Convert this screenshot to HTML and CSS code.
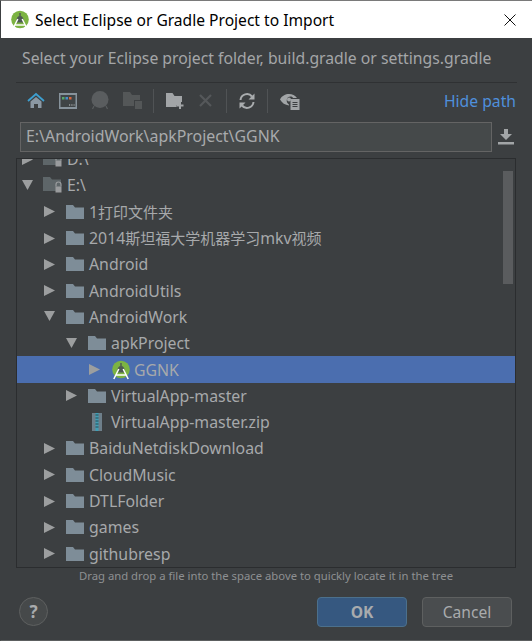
FILE: index.html
```html
<!DOCTYPE html>
<html lang="en">
<head>
<meta charset="utf-8">
<title>Select Eclipse or Gradle Project to Import</title>
<link rel="stylesheet" href="styles.css">
</head>
<body>
<svg class="defs" width="0" height="0" aria-hidden="true">
  <defs>
    <symbol id="folder" viewBox="0 0 18 14"><path d="M0 0h7l2 2.500h9V14H0z" fill="#7e8d98"/></symbol>
    <symbol id="locked" viewBox="0 0 20 16"><path d="M0 0h7l2 2.500h9V14H0z" fill="#5e6669"/><path d="M13 9.500v-2a2.500 2.500 0 0 1 5 0v2" fill="none" stroke="#9a9c9e" stroke-width="1.200"/><rect x="12.500" y="9.500" width="6" height="6" fill="#9a9c9e"/></symbol>
    <symbol id="open" viewBox="0 0 11 11"><path d="M0 0l11 5.500L0 11z" fill="#9c9e9f"/></symbol>
    <symbol id="down" viewBox="0 0 11 11"><path d="M0 0h11L5.500 10z" fill="#9c9e9f"/></symbol>
    <symbol id="android" viewBox="0 0 20 20"><circle cx="10" cy="9.500" r="8.800" fill="#7cb342"/><path d="M10 3v3" stroke="#4e5a52" stroke-width="1.500"/><path d="M6.500 10.500a3.500 4.500 0 0 1 7 0v2h-7z" fill="#4e5a52"/><path d="M7.800 9L2.800 19M12.200 9L17.200 19M4.800 15h10.400" stroke="#fff" stroke-width="1.500" fill="none"/></symbol>
  </defs>
</svg>
<div class="window">
  <header class="titlebar">
    <svg class="title-logo" width="20" height="20"><use href="#android"/></svg>
    <span class="title-text">Select Eclipse or Gradle Project to Import</span>
    <svg class="close" width="12" height="12" viewBox="0 0 12 12"><path d="M.5.500l11 11M11.500.500l-11 11" stroke="#111" stroke-width="1" fill="none"/></svg>
  </header>
  <main class="content">
    <p class="description">Select your Eclipse project folder, build.gradle or settings.gradle</p>
    <div class="toolbar">
      <svg class="tool" width="18" height="18" viewBox="0 0 18 18"><path d="M1 9l8-7 8 7" fill="none" stroke="#3d9fd0" stroke-width="1.800"/><path d="M3.500 9.500L9 5l5.500 4.500V16H11v-4H7v4H3.500z" fill="#8b98a3"/></svg>
      <svg class="tool" width="18" height="16" viewBox="0 0 18 16"><rect width="18" height="16" fill="#87939c"/><rect x="1.500" y="2" width="15" height="12" fill="#3f4446"/><rect x="3" y="4" width="2.500" height="2.500" fill="#59a869"/><rect x="6.500" y="4" width="2.500" height="2.500" fill="#4b8fc9"/><rect x="10" y="4" width="2.500" height="2.500" fill="#d9663f"/><path d="M10 12h1.200M12.300 12h1.200M14.600 12h1" stroke="#c4c7c9"/></svg>
      <svg class="tool" width="18" height="19" viewBox="0 0 18 19"><circle cx="9" cy="8.500" r="8.500" fill="#5a5d5f"/><path d="M3 15l-1.500 3M15 15l1.500 3" stroke="#5a5d5f" stroke-width="1.200"/></svg>
      <svg class="tool tight-more" width="19" height="17" viewBox="0 0 19 17"><path d="M0 0h7l2 3h8v5h-6v6H0z" fill="#545758"/><rect x="12" y="9" width="7" height="8" fill="#545758"/></svg>
      <span class="sep"></span>
      <svg class="tool" width="19" height="16" viewBox="0 0 19 16"><path d="M0 0h6.500l2 3H16v6h-3v3h-2.500v2H0z" fill="#a2a5a7"/><path d="M14 9v7M10.500 12.500h7" stroke="#a2a5a7" stroke-width="2"/></svg>
      <svg class="tool" width="13" height="13" viewBox="0 0 13 13"><path d="M1 1l11 11M12 1L1 12" stroke="#55585a" stroke-width="2.200"/></svg>
      <span class="sep"></span>
      <svg class="tool tight" width="16" height="16" viewBox="0 0 16 16"><path d="M1.500 7A6.500 6.500 0 0 1 13 3.500M14.500 9A6.500 6.500 0 0 1 3 12.500" fill="none" stroke="#a9acae" stroke-width="2"/><path d="M15.500.500v6h-6zM.500 15.500v-6h6z" fill="#a9acae"/></svg>
      <span class="sep"></span>
      <svg class="tool" width="20" height="19" viewBox="0 0 20 19"><path d="M0 8.500C3 2 13 1 17 7h-4c-1-2-5-2-6 1s1 5 2 5.500v1C5 14 2 12 0 8.500z" fill="#a2a5a7"/><circle cx="9" cy="8.500" r="2" fill="#a2a5a7"/><rect x="10.500" y="8" width="9" height="11" fill="#a2a5a7"/><path d="M12.500 11.500h5M12.500 13.500h5M12.500 15.500h5" stroke="#3c3f41"/></svg>
      <a class="hide-path">Hide path</a>
    </div>
    <div class="path-row">
      <div class="path-input">E:\AndroidWork\apkProject\GGNK</div>
      <svg class="download" width="16" height="16" viewBox="0 0 16 16"><path d="M6 0h4v5h4l-6 6-6-6h4z" fill="#a2a5a7"/><rect y="13" width="16" height="2.500" fill="#a2a5a7"/></svg>
    </div>
    <div class="tree">
      <div class="tree-rows">
        <div class="row lvl0"><svg class="arrow" width="11" height="11"><use href="#open"/></svg><svg class="drive" width="20" height="16"><use href="#locked"/></svg><span class="name">D:\</span></div>
        <div class="row lvl0"><svg class="arrow" width="11" height="11"><use href="#down"/></svg><svg class="drive" width="20" height="16"><use href="#locked"/></svg><span class="name">E:\</span></div>
        <div class="row lvl1"><svg class="arrow" width="11" height="11"><use href="#open"/></svg><svg class="folder" width="18" height="14"><use href="#folder"/></svg><span class="name">1<span class="cjk">打印文件夹</span></span></div>
        <div class="row lvl1"><svg class="arrow" width="11" height="11"><use href="#open"/></svg><svg class="folder" width="18" height="14"><use href="#folder"/></svg><span class="name">2014<span class="cjk">斯坦福大学机器学习</span>mkv<span class="cjk">视频</span></span></div>
        <div class="row lvl1"><svg class="arrow" width="11" height="11"><use href="#open"/></svg><svg class="folder" width="18" height="14"><use href="#folder"/></svg><span class="name">Android</span></div>
        <div class="row lvl1"><svg class="arrow" width="11" height="11"><use href="#open"/></svg><svg class="folder" width="18" height="14"><use href="#folder"/></svg><span class="name">AndroidUtils</span></div>
        <div class="row lvl1"><svg class="arrow" width="11" height="11"><use href="#down"/></svg><svg class="folder" width="18" height="14"><use href="#folder"/></svg><span class="name">AndroidWork</span></div>
        <div class="row lvl2"><svg class="arrow" width="11" height="11"><use href="#down"/></svg><svg class="folder" width="18" height="14"><use href="#folder"/></svg><span class="name">apkProject</span></div>
        <div class="row lvl3 selected"><svg class="arrow" width="11" height="11"><use href="#open"/></svg><svg class="project" width="20" height="20"><use href="#android"/></svg><span class="name">GGNK</span></div>
        <div class="row lvl2"><svg class="arrow" width="11" height="11"><use href="#open"/></svg><svg class="folder" width="18" height="14"><use href="#folder"/></svg><span class="name">VirtualApp-master</span></div>
        <div class="row lvl2"><span class="arrow-space"></span><svg class="zip" width="18" height="18" viewBox="0 0 18 18"><rect x="4" y="0" width="10" height="18" fill="#6e7f8a"/><rect x="7.500" y="0" width="3" height="18" fill="#3f9fb5"/><path d="M7.500 2h3M7.500 5h3M7.500 8h3M7.500 11h3M7.500 14h3" stroke="#2a4a55"/></svg><span class="name">VirtualApp-master.zip</span></div>
        <div class="row lvl1"><svg class="arrow" width="11" height="11"><use href="#open"/></svg><svg class="folder" width="18" height="14"><use href="#folder"/></svg><span class="name">BaiduNetdiskDownload</span></div>
        <div class="row lvl1"><svg class="arrow" width="11" height="11"><use href="#open"/></svg><svg class="folder" width="18" height="14"><use href="#folder"/></svg><span class="name">CloudMusic</span></div>
        <div class="row lvl1"><svg class="arrow" width="11" height="11"><use href="#open"/></svg><svg class="folder" width="18" height="14"><use href="#folder"/></svg><span class="name">DTLFolder</span></div>
        <div class="row lvl1"><svg class="arrow" width="11" height="11"><use href="#open"/></svg><svg class="folder" width="18" height="14"><use href="#folder"/></svg><span class="name">games</span></div>
        <div class="row lvl1"><svg class="arrow" width="11" height="11"><use href="#open"/></svg><svg class="folder" width="18" height="14"><use href="#folder"/></svg><span class="name">githubresp</span></div>
      </div>
      <div class="scrollbar"></div>
    </div>
    <p class="hint">Drag and drop a file into the space above to quickly locate it in the tree</p>
    <footer class="footer">
      <button class="help">?</button>
      <button class="btn ok">OK</button>
      <button class="btn cancel">Cancel</button>
    </footer>
  </main>
</div>
</body>
</html>
```

FILE: styles.css
```css
* { box-sizing: border-box; }
html, body { margin: 0; height: 100%; }
body { font-family: "Noto Sans", "Noto Sans CJK SC", sans-serif; overflow: hidden; background: #3c3f41; }
.defs { position: absolute; }
.window { width: 532px; height: 641px; display: flex; flex-direction: column; border: 1px solid #7a7a7a; border-bottom-color: #5c5f60; border-right: 0; border-left-color: #3c3f41; }
.titlebar { height: 37px; flex: none; background: #fff; display: flex; align-items: center; padding: 0 16px 0 9px; }
.title-logo { flex: none; }
.title-text { margin-left: 5px; font-size: 15.6px; color: #000; flex: 1; white-space: nowrap; }
.content { flex: 1; min-height: 0; display: flex; flex-direction: column; padding: 0 15px; background: #3c3f41; }
.description { margin: 10px 0 0 6px; height: 34px; font-size: 15.75px; line-height: 20px; color: #a4a6a8; white-space: nowrap; }
.toolbar { height: 36px; flex: none; display: flex; align-items: center; border-top: 1px solid #2f3133; padding: 0 1px 0 11px; }
.tool { flex: none; margin-right: 14px; }
.tool.tight { margin-right: 12px; }
.tool.tight-more { margin-right: 11px; }
.sep { width: 1px; height: 24px; background: #505355; margin-right: 12px; flex: none; }
.hide-path { margin-left: auto; font-size: 15.7px; color: #4f8fdc; }
.path-row { height: 30px; flex: none; display: flex; align-items: center; margin-top: 4px; padding-left: 4px; }
.path-input { width: 472px; height: 30px; border: 1px solid #646464; background: #45494a; color: #a9abad; font-size: 15.9px; line-height: 27px; padding-left: 5px; white-space: nowrap; }
.download { margin-left: 6px; }
.tree { position: relative; flex: none; height: 410px; margin: 6px 1px 0 0; border: 1px solid #2b2d2f; overflow: hidden; }
.tree-rows { margin-top: -13px; }
.row { height: 26.3px; display: flex; align-items: center; font-size: 15.85px; color: #a7a9ab; white-space: nowrap; }
.name { margin-left: 5px; }
.cjk { font-size: 15px; }
.lvl0 { padding-left: 5px; }
.lvl0 .name { margin-left: 4px; }
.lvl1 { padding-left: 27px; }
.lvl2 { padding-left: 49px; }
.lvl3 { padding-left: 72px; }
.arrow { flex: none; margin-right: 11px; }
.arrow-space { width: 22px; flex: none; }
.lvl0 .arrow { margin-right: 10px; }
.selected { background: #4b6eaf; }
.selected .name { margin-left: 3px; }
.scrollbar { position: absolute; right: 2px; top: 12px; width: 10px; height: 113px; background: #5a5c5e; }
.hint { margin: 0; height: 15px; font-size: 11.3px; line-height: 15px; color: #8e9092; text-align: center; padding-right: 1px; white-space: nowrap; }
.footer { flex: 1; display: flex; align-items: center; gap: 15px; padding: 0 5px 0 3px; }
.help { width: 29px; height: 29px; border-radius: 50%; border: 1px solid #5e6060; background: #46494a; color: #a9abad; font: 700 17px "Noto Sans", sans-serif; padding: 0; margin-right: auto; }
.btn { width: 90px; height: 30px; border-radius: 4px; font: 15.6px "Noto Sans", sans-serif; padding: 0; }
.ok { background: #365880; border: 1px solid #4c708c; color: #a9abad; font-weight: 700; }
.cancel { background: #4a4d4f; border: 1px solid #5e6060; color: #a9abad; }
```
